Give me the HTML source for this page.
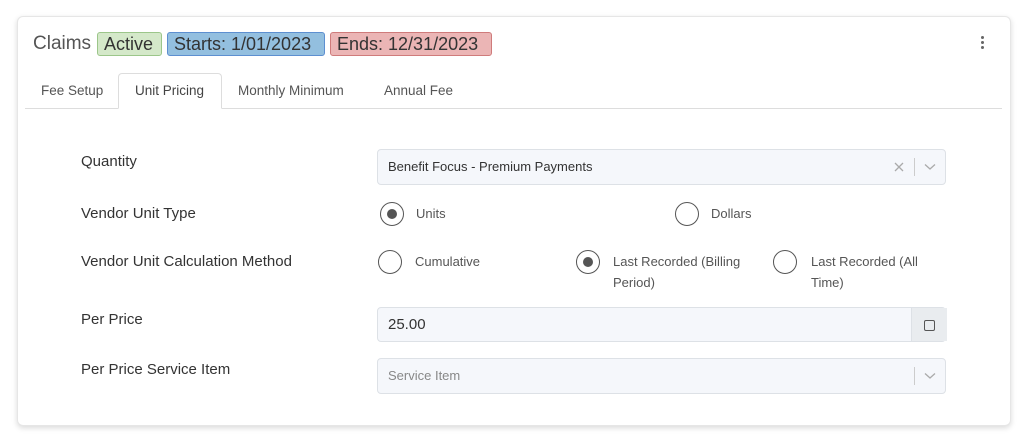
<!DOCTYPE html><html><head><style>
body{margin:0;width:1024px;height:442px;background:#fff;font-family:"Liberation Sans",sans-serif;position:relative;overflow:hidden}
.card{position:absolute;left:17px;top:16px;width:992px;height:408px;border:1px solid #e6e6e6;border-radius:6px;box-shadow:0 2px 6px rgba(0,0,0,.15);background:#fff}
.a{position:absolute;white-space:nowrap}
.badge{position:absolute;top:32px;border:1px solid;border-radius:3px;font-size:18px;line-height:22px;padding:0 6px;color:#333;box-sizing:border-box;height:24px}
.lbl{position:absolute;left:81px;font-size:15px;color:#333}
.inp{position:absolute;left:377px;width:569px;border:1px solid #dde1e6;border-radius:4px;background:#f5f7fb;box-sizing:border-box;font-size:14px;color:#333}
.r{position:absolute;width:24px;height:24px;border:1.5px solid #555;border-radius:50%;box-sizing:border-box}
.r.on::after{content:"";position:absolute;left:5.5px;top:5.5px;width:10px;height:10px;border-radius:50%;background:#555}
.rt{position:absolute;font-size:13px;color:#555;line-height:21px}
.tab{position:absolute;top:83px;font-size:13.5px;color:#555}
</style></head><body>
<div class="card"></div>
<div class="a" style="left:33px;top:33px;font-size:19px;color:#555">Claims</div>
<div class="badge" style="left:97px;width:65px;background:#d4e8c9;border-color:#9cc68a">Active</div>
<div class="badge" style="left:167px;width:158px;background:#93bfdf;border-color:#5d8fd0">Starts: 1/01/2023</div>
<div class="badge" style="left:330px;width:162px;background:#ebb5b5;border-color:#cf7b7b">Ends: 12/31/2023</div>
<div class="a" style="left:981px;top:36px;width:3px;height:3px;border-radius:50%;background:#666;box-shadow:0 5px 0 #666,0 10px 0 #666"></div>
<div class="a" style="left:25px;top:108px;width:977px;height:1px;background:#ddd"></div>
<div class="a" style="left:118px;top:73px;width:104px;height:36px;border:1px solid #ddd;border-bottom:1px solid #fff;border-radius:4px 4px 0 0;background:#fff;box-sizing:border-box"></div>
<div class="tab" style="left:41px">Fee Setup</div>
<div class="tab" style="left:135px;color:#444">Unit Pricing</div>
<div class="tab" style="left:238px">Monthly Minimum</div>
<div class="tab" style="left:384px">Annual Fee</div>
<div class="lbl" style="top:153px">Quantity</div>
<div class="lbl" style="top:205px">Vendor Unit Type</div>
<div class="lbl" style="top:253px">Vendor Unit Calculation Method</div>
<div class="lbl" style="top:311px">Per Price</div>
<div class="lbl" style="top:361px">Per Price Service Item</div>
<div class="inp" style="top:149px;height:36px;line-height:34px;padding-left:10px;font-size:13px">Benefit Focus - Premium Payments
<svg class="a" style="left:516px;top:12px" width="10" height="10"><path d="M1 1L9 9M9 1L1 9" stroke="#aaa" stroke-width="1.3"/></svg>
<span class="a" style="left:536px;top:8px;width:1px;height:18px;background:#ccc"></span>
<svg class="a" style="left:546px;top:13px" width="12" height="8"><path d="M1 1.5L6 6L11 1.5" stroke="#aaa" stroke-width="1.3" fill="none"/></svg></div>
<div class="r on" style="left:380px;top:202px"></div><div class="rt" style="left:416px;top:203px">Units</div>
<div class="r" style="left:675px;top:202px"></div><div class="rt" style="left:711px;top:203px">Dollars</div>
<div class="r" style="left:378px;top:250px"></div><div class="rt" style="left:415px;top:251px">Cumulative</div>
<div class="r on" style="left:576px;top:250px"></div><div class="rt" style="left:613px;top:251px">Last Recorded (Billing<br>Period)</div>
<div class="r" style="left:773px;top:250px"></div><div class="rt" style="left:811px;top:251px">Last Recorded (All<br>Time)</div>
<div class="inp" style="top:307px;height:35px;line-height:33px;padding-left:10px;font-size:15px">25.00
<span class="a" style="left:533px;top:0;width:35px;height:33px;background:#e9ecef;border-left:1px solid #dde1e6"></span>
<span class="a" style="left:546px;top:12px;width:9px;height:9px;border:1px solid #555;border-radius:2px"></span></div>
<div class="inp" style="top:358px;height:36px;line-height:34px;padding-left:10px;font-size:13px;color:#888">Service Item
<span class="a" style="left:536px;top:8px;width:1px;height:18px;background:#ccc"></span>
<svg class="a" style="left:546px;top:13px" width="12" height="8"><path d="M1 1.5L6 6L11 1.5" stroke="#aaa" stroke-width="1.3" fill="none"/></svg></div>
</body></html>
